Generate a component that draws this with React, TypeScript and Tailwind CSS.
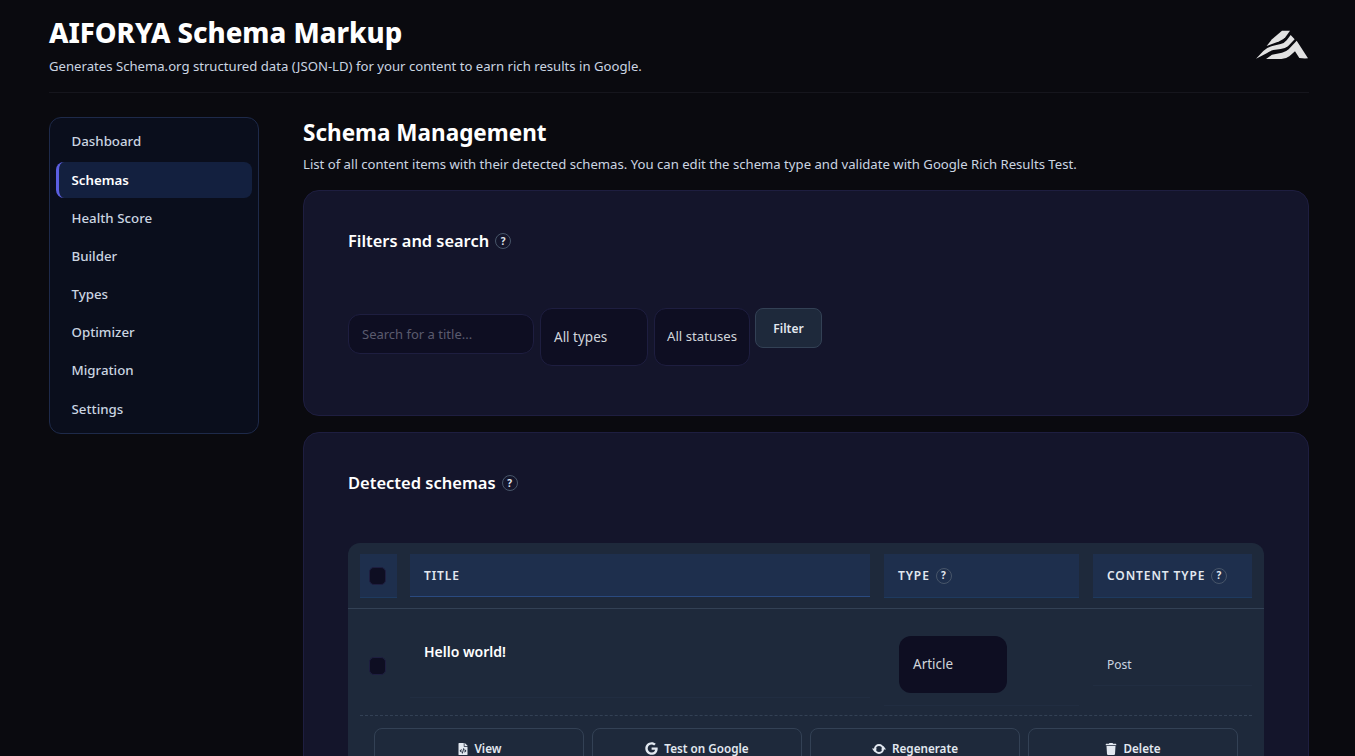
import { FaGoogle, FaTrash, FaFileCode } from "react-icons/fa";

const navItems = ["Dashboard", "Schemas", "Health Score", "Builder", "Types", "Optimizer", "Migration", "Settings"];

function Help() {
  return (
    <span className="inline-flex items-center justify-center w-4 h-4 rounded-full border border-[#475569] font-bold text-[10px] text-[#e2e8f0]">?</span>
  );
}

function Logo() {
  return (
    <svg width="62" height="38" viewBox="0 0 186 114" fill="#e2e2e2" className="mt-[11px] -mr-[3px]">
      <path d="M96 14 H120 L106 34 Q100 41 88 46 L50 60 L66 40 Z" />
      <path d="M122 27 L134 40 L114 61 Q106 67 92 69 L70 72 Q58 75 50 82 L18 98 L40 75 Q52 63 70 59 L92 54 Q104 51 110 43 Z" />
      <path d="M140 44 L174 97 Q160 98 148 96 L135 76 L118 91 Q108 99 94 99 L48 99 L66 86 L96 80 Q108 78 116 70 Z" />
    </svg>
  );
}

function SyncIcon() {
  return (
    <svg width="14" height="12" viewBox="0 0 14 12">
      <circle cx="7" cy="6" r="4" fill="none" stroke="currentColor" strokeWidth="2" />
      <path d="M0 5.5 H5 L2.5 9 Z M9 6.5 H14 L11.5 3 Z" fill="currentColor" />
    </svg>
  );
}

function ActionButton({ icon, label }: { icon: React.ReactNode; label: string }) {
  return (
    <button className="flex-1 h-[42px] flex items-center justify-center gap-[6px] rounded-lg border border-[#334155] text-[11.7px] font-semibold text-[#e2e8f0] pb-[1px]">
      {icon}
      {label}
    </button>
  );
}

export default function App() {
  return (
    <div className="h-[756px] overflow-hidden bg-[#0a0a0f] pl-[49px] pr-[46px] font-['Noto_Sans','Open_Sans',sans-serif] text-[#e2e8f0]">
      <div id="header" className="flex justify-between items-start h-[93px] border-b border-[#16161d] pt-[15px]">
        <div>
          <h1 className="text-[27.5px] leading-[36px] font-extrabold text-white">AIFORYA Schema Markup</h1>
          <p className="text-[13.15px] leading-[18px] mt-[6px] text-[#cbd5e1]">Generates Schema.org structured data (JSON-LD) for your content to earn rich results in Google.</p>
        </div>
        <Logo />
      </div>

      <div className="flex gap-[44px] mt-[24px]">
        <div id="sidebar" className="w-[210px] h-[317px] shrink-0 rounded-xl border border-[#1e2a4a] bg-[#0a0e1c] px-[6px] py-[6px] flex flex-col gap-[2.3px]">
          {navItems.map((item) =>
            item === "Schemas" ? (
              <div key={item} className="h-[36px] flex items-center pl-[12.5px] pt-[1px] rounded-lg border-l-[3px] border-[#5b5fe0] bg-[#13203f] text-[13.3px] font-semibold text-white">{item}</div>
            ) : (
              <div key={item} className="h-[36px] flex items-center pl-[15.5px] pt-[1px] text-[13.3px] font-medium text-[#cbd5e1]">{item}</div>
            )
          )}
        </div>

        <div id="main" className="flex-1">
          <h2 className="text-[22.5px] leading-[30px] font-bold text-white mt-[1px]">Schema Management</h2>
          <p className="text-[13.15px] leading-[18px] mt-[7px] text-[#cbd5e1]">List of all content items with their detected schemas. You can edit the schema type and validate with Google Rich Results Test.</p>

          <div className="mt-[17px] h-[226px] rounded-2xl border border-[#1e1e40] bg-[#14152b] px-[44px] pt-[38px]">
            <div className="flex items-center gap-[6px]">
              <h3 className="text-[16.4px] leading-[24px] font-semibold text-white">Filters and search</h3>
              <Help />
            </div>
            <div className="flex items-start gap-[6px] mt-[55px]">
              <div className="w-[186px] h-[40px] mt-[6px] flex items-center px-[13px] pt-[2px] rounded-xl border border-[#1e1e40] bg-[#0e0e22] text-[13px] text-[#5b5b6e]">Search for a title...</div>
              <div className="w-[108px] h-[58px] flex items-center px-[13px] rounded-xl border border-[#1e1e40] bg-[#0e0e22] text-[13.5px] text-[#d1d5db]">All types</div>
              <div className="w-[96px] h-[58px] flex items-center pl-[12px] rounded-xl border border-[#1e1e40] bg-[#0e0e22] text-[13.2px] text-[#d1d5db] whitespace-nowrap">All statuses</div>
              <button className="w-[67px] h-[40px] -ml-px pt-[1px] rounded-lg border border-[#334155] bg-[#1e293b] text-[12px] font-semibold text-[#e2e8f0]">Filter</button>
            </div>
          </div>

          <div className="mt-[16px] h-[400px] rounded-2xl border border-[#1e1e40] bg-[#14152b] px-[44px] pt-[38px]">
            <div className="flex items-center gap-[6px]">
              <h3 className="text-[16.5px] leading-[24px] font-semibold text-white">Detected schemas</h3>
              <Help />
            </div>
            <div id="table" className="mt-[48px] rounded-xl bg-[#1e293b] h-[300px]">
              <div className="flex gap-[14px] px-[12px] pt-[11px] h-[66px] border-b border-[#334155]">
                <div className="w-[37px] -mr-px pr-[2px] h-[44px] flex items-center justify-center bg-[#1e2f4d] border-b border-[#1e3a5f]">
                  <span className="w-[17px] h-[18px] rounded-[5px] border border-[#1e1e40] bg-[#0e0e22]" />
                </div>
                <div className="w-[460px] h-[43px] flex items-center pl-[14px] pt-[2px] bg-[#1e2f4d] border-b border-[#2a4a80] text-[12px] font-semibold tracking-[0.9px] text-[#e2e8f0]">TITLE</div>
                <div className="w-[195px] h-[44px] flex items-center gap-[6px] pl-[14px] bg-[#1e2f4d] border-b border-[#1e3a5f] text-[12px] font-semibold tracking-[0.9px] text-[#e2e8f0]">TYPE <Help /></div>
                <div className="w-[159px] h-[44px] flex items-center gap-[6px] pl-[14px] bg-[#1e2f4d] border-b border-[#1e3a5f] text-[12px] font-semibold tracking-[0.9px] text-[#e2e8f0] whitespace-nowrap">CONTENT TYPE <Help /></div>
              </div>

              <div className="flex gap-[14px] mx-[12px] h-[107px] border-b border-dashed border-[#334155]">
                <div className="w-[37px] -mr-px pr-[2px] flex items-center justify-center">
                  <span className="w-[17px] h-[18px] mt-[7px] rounded-[5px] border border-[#1e1e40] bg-[#0e0e22]" />
                </div>
                <div className="w-[460px] h-[89px] pl-[14px] pt-[33px] border-b border-[#212d41] text-[14px] leading-[20px] font-semibold text-white">Hello world!</div>
                <div className="w-[195px] h-[97px] pl-[15px] pt-[27px] border-b border-[#212d41]">
                  <div className="w-[108px] h-[57px] flex items-center pl-[14px] rounded-xl bg-[#0e0e22] text-[13.5px] text-[#d1d5db]">Article</div>
                </div>
                <div className="w-[159px] h-[77px] flex items-end pb-[11px] pl-[14px] border-b border-[#212d41] text-[12px] text-[#cbd5e1]">Post</div>
              </div>

              <div className="flex gap-[8px] px-[26px] pt-[12px]">
                <ActionButton icon={<FaFileCode size={12} />} label="View" />
                <ActionButton icon={<FaGoogle size={13} />} label="Test on Google" />
                <ActionButton icon={<SyncIcon />} label="Regenerate" />
                <ActionButton icon={<FaTrash size={12} />} label="Delete" />
              </div>
            </div>
          </div>
        </div>
      </div>
    </div>
  );
}
